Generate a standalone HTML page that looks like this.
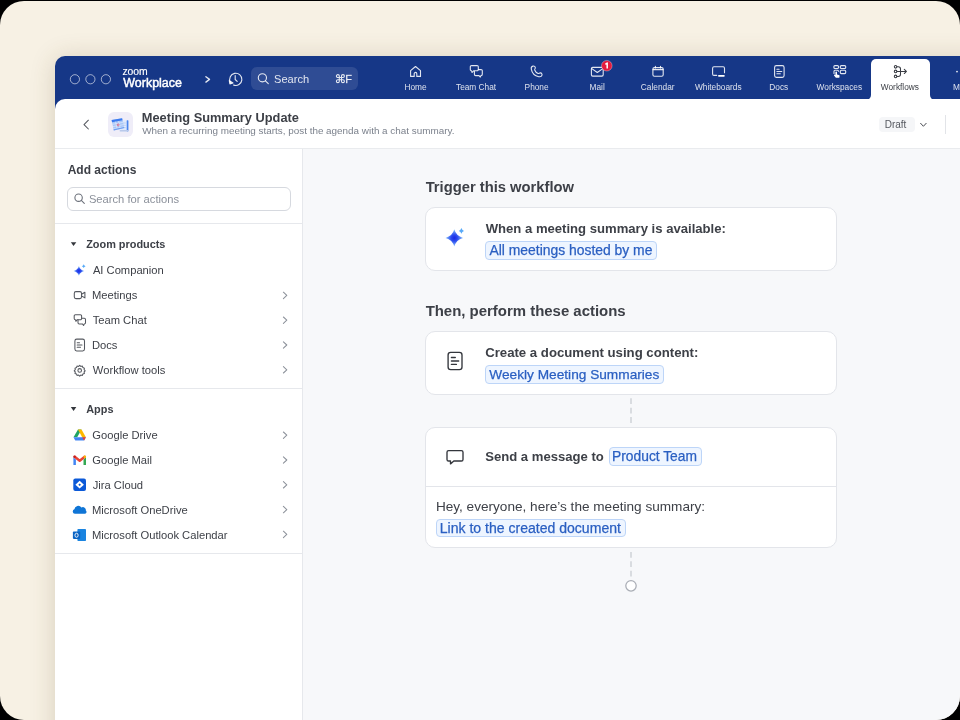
<!DOCTYPE html>
<html><head><meta charset="utf-8"><style>
html,body{margin:0;padding:0;width:960px;height:720px;overflow:hidden;background:#000;}
*{box-sizing:border-box;}
.frame{position:absolute;left:0;top:1px;width:960px;height:719px;border-radius:24px;background:#f7f1e4;overflow:hidden;}
.t{position:absolute;white-space:nowrap;font-family:"Liberation Sans",sans-serif;-webkit-font-smoothing:antialiased;}
.abs{position:absolute;}
.win{position:absolute;left:55px;top:56px;width:960px;height:720px;border-radius:10px 0 0 0;background:#163787;box-shadow:0 2px 26px rgba(90,70,30,0.20);}
.header{position:absolute;left:55px;top:99px;width:960px;height:50px;background:#fff;border-radius:10px 0 0 0;border-bottom:1px solid #e9ebee;}
.side{position:absolute;left:55px;top:149px;width:248px;height:600px;background:#fff;border-right:1px solid #e6e8ec;}
.canvas{position:absolute;left:303px;top:149px;width:700px;height:600px;background:#f7f8fa;}
.card{position:absolute;background:#fff;border:1px solid #e3e5ea;border-radius:10px;}
.chip{position:absolute;background:#eef5ff;border:1px solid #bdd5f8;border-radius:4px;}
</style></head><body>
<div class="frame"><div class="abs" style="left:0;top:-1px;width:960px;height:720px;will-change:transform">
<div class="win"></div>
<div class="abs" style="left:251px;top:67px;width:107px;height:23px;border-radius:6px;background:rgba(255,255,255,0.11)"></div>
<div class="abs" style="left:866px;top:94px;width:69px;height:10px;background:#fff"></div>
<div class="abs" style="left:856px;top:56px;width:15px;height:43.5px;background:#163787;border-radius:0 0 5px 0"></div>
<div class="abs" style="left:930px;top:56px;width:40px;height:43.5px;background:#163787;border-radius:0 0 0 5px"></div>
<div class="abs" style="left:871px;top:59px;width:59px;height:45px;background:#fff;border-radius:5px 5px 0 0"></div>
<div class="header"></div>
<div class="abs" style="left:107.5px;top:112px;width:25px;height:25px;border-radius:6px;background:#efedf8"></div>
<div class="abs" style="left:879px;top:116.7px;width:35.5px;height:15.5px;border-radius:4px;background:#f5f6f8"></div>
<div class="abs" style="left:945px;top:115px;width:1px;height:19px;background:#e2e4e8"></div>
<div class="side"></div>
<div class="abs" style="left:67.3px;top:186.7px;width:223.5px;height:24.8px;border:1px solid #d6d9df;border-radius:6px;background:#fff"></div>
<div class="abs" style="left:55px;top:223px;width:247.5px;height:1px;background:#e6e8ec"></div>
<div class="abs" style="left:55px;top:388px;width:247.5px;height:1px;background:#e6e8ec"></div>
<div class="abs" style="left:55px;top:553px;width:247.5px;height:1px;background:#e6e8ec"></div>
<div class="canvas"></div>
<div class="card" style="left:425.3px;top:206.7px;width:412px;height:64px"></div>
<div class="card" style="left:425.3px;top:330.9px;width:412px;height:64px"></div>
<div class="card" style="left:425.3px;top:426.7px;width:412px;height:121.8px"></div>
<div class="abs" style="left:426px;top:485.6px;width:410px;height:1px;background:#e3e5ea"></div>
<div class="chip" style="left:485.1px;top:241.1px;width:172.40px;height:18.5px"></div>
<div class="t" style="left:489.47px;top:244px;font-size:13.9px;line-height:13.9px;font-weight:400;color:#2a5fc2;-webkit-text-stroke:0.25px #2a5fc2">All meetings hosted by me</div>
<div class="chip" style="left:485.1px;top:365.1px;width:179.30px;height:18.5px"></div>
<div class="t" style="left:489.34px;top:368px;font-size:13.68px;line-height:13.68px;font-weight:400;color:#2a5fc2;-webkit-text-stroke:0.25px #2a5fc2">Weekly Meeting Summaries</div>
<div class="chip" style="left:608.6px;top:447.25px;width:93.40px;height:18.5px"></div>
<div class="t" style="left:612.07px;top:450px;font-size:13.8px;line-height:13.8px;font-weight:400;color:#2a5fc2;-webkit-text-stroke:0.25px #2a5fc2">Product Team</div>
<div class="chip" style="left:436.2px;top:518.75px;width:189.60px;height:18.5px"></div>
<div class="t" style="left:439.75px;top:521px;font-size:14.05px;line-height:14.05px;font-weight:400;color:#2a5fc2;-webkit-text-stroke:0.25px #2a5fc2">Link to the created document</div>

<div class="t" style="left:375.50px;width:80px;text-align:center;top:83px;font-size:8.3px;line-height:8.3px;font-weight:400;color:rgba(255,255,255,0.85);">Home</div>
<div class="t" style="left:436.05px;width:80px;text-align:center;top:83px;font-size:8.3px;line-height:8.3px;font-weight:400;color:rgba(255,255,255,0.85);">Team Chat</div>
<div class="t" style="left:496.60px;width:80px;text-align:center;top:83px;font-size:8.3px;line-height:8.3px;font-weight:400;color:rgba(255,255,255,0.85);">Phone</div>
<div class="t" style="left:557.15px;width:80px;text-align:center;top:83px;font-size:8.3px;line-height:8.3px;font-weight:400;color:rgba(255,255,255,0.85);">Mail</div>
<div class="t" style="left:617.70px;width:80px;text-align:center;top:83px;font-size:8.3px;line-height:8.3px;font-weight:400;color:rgba(255,255,255,0.85);">Calendar</div>
<div class="t" style="left:678.25px;width:80px;text-align:center;top:83px;font-size:8.3px;line-height:8.3px;font-weight:400;color:rgba(255,255,255,0.85);">Whiteboards</div>
<div class="t" style="left:738.80px;width:80px;text-align:center;top:83px;font-size:8.3px;line-height:8.3px;font-weight:400;color:rgba(255,255,255,0.85);">Docs</div>
<div class="t" style="left:799.35px;width:80px;text-align:center;top:83px;font-size:8.3px;line-height:8.3px;font-weight:400;color:rgba(255,255,255,0.85);">Workspaces</div>
<div class="t" style="left:859.90px;width:80px;text-align:center;top:83px;font-size:8.3px;line-height:8.3px;font-weight:400;color:#3a3d44;">Workflows</div>
<div class="t" style="left:922.45px;width:80px;text-align:center;top:83px;font-size:8.3px;line-height:8.3px;font-weight:400;color:rgba(255,255,255,0.85);">More</div>
<div class="t" style="left:122.58px;top:67px;font-size:10.4px;line-height:10.4px;font-weight:400;color:#fff;letter-spacing:-0.15px;-webkit-text-stroke:0.15px #fff">zoom</div>
<div class="t" style="left:123.35px;top:77px;font-size:12.45px;line-height:12.45px;font-weight:400;color:#fff;-webkit-text-stroke:0.45px #fff">Workplace</div>
<div class="t" style="left:274.00px;top:74px;font-size:11.1px;line-height:11.1px;font-weight:400;color:rgba(255,255,255,0.86);">Search</div>
<div class="t" style="left:345.20px;top:74px;font-size:11.0px;line-height:11.0px;font-weight:400;color:rgba(255,255,255,0.88);-webkit-text-stroke:0.3px rgba(255,255,255,0.6)">F</div>
<div class="t" style="left:141.74px;top:112px;font-size:12.8px;line-height:12.8px;font-weight:700;color:#3d4047;">Meeting Summary Update</div>
<div class="t" style="left:142.26px;top:126px;font-size:9.9px;line-height:9.9px;font-weight:400;color:#7b818c;">When a recurring meeting starts, post the agenda with a chat summary.</div>
<div class="t" style="left:884.68px;top:120px;font-size:10.0px;line-height:10.0px;font-weight:400;color:#55585f;">Draft</div>
<div class="t" style="left:67.70px;top:164px;font-size:12.0px;line-height:12.0px;font-weight:700;color:#3d4047;">Add actions</div>
<div class="t" style="left:88.89px;top:194px;font-size:11.2px;line-height:11.2px;font-weight:400;color:#8b909a;">Search for actions</div>
<div class="t" style="left:86.18px;top:239px;font-size:10.9px;line-height:10.9px;font-weight:700;color:#3d4047;">Zoom products</div>
<div class="t" style="left:86.23px;top:404px;font-size:10.9px;line-height:10.9px;font-weight:700;color:#3d4047;">Apps</div>
<div class="t" style="left:92.88px;top:265px;font-size:11.2px;line-height:11.2px;font-weight:400;color:#3e4148;">AI Companion</div>
<div class="t" style="left:91.98px;top:290px;font-size:11.2px;line-height:11.2px;font-weight:400;color:#3e4148;">Meetings</div>
<div class="t" style="left:92.65px;top:315px;font-size:11.2px;line-height:11.2px;font-weight:400;color:#3e4148;">Team Chat</div>
<div class="t" style="left:91.98px;top:340px;font-size:11.2px;line-height:11.2px;font-weight:400;color:#3e4148;">Docs</div>
<div class="t" style="left:92.85px;top:365px;font-size:11.2px;line-height:11.2px;font-weight:400;color:#3e4148;">Workflow tools</div>
<div class="t" style="left:92.34px;top:430px;font-size:11.2px;line-height:11.2px;font-weight:400;color:#3e4148;">Google Drive</div>
<div class="t" style="left:92.34px;top:455px;font-size:11.2px;line-height:11.2px;font-weight:400;color:#3e4148;">Google Mail</div>
<div class="t" style="left:92.73px;top:480px;font-size:11.2px;line-height:11.2px;font-weight:400;color:#3e4148;">Jira Cloud</div>
<div class="t" style="left:91.98px;top:505px;font-size:11.2px;line-height:11.2px;font-weight:400;color:#3e4148;">Microsoft OneDrive</div>
<div class="t" style="left:91.98px;top:530px;font-size:11.2px;line-height:11.2px;font-weight:400;color:#3e4148;">Microsoft Outlook Calendar</div>
<div class="t" style="left:425.63px;top:180px;font-size:14.75px;line-height:14.75px;font-weight:700;color:#3d4047;">Trigger this workflow</div>
<div class="t" style="left:485.69px;top:222px;font-size:13.1px;line-height:13.1px;font-weight:700;color:#3d4047;">When a meeting summary is available:</div>
<div class="t" style="left:425.63px;top:304px;font-size:14.95px;line-height:14.95px;font-weight:700;color:#3d4047;">Then, perform these actions</div>
<div class="t" style="left:485.16px;top:346px;font-size:13.2px;line-height:13.2px;font-weight:700;color:#3d4047;">Create a document using content:</div>
<div class="t" style="left:485.22px;top:450px;font-size:13.1px;line-height:13.1px;font-weight:700;color:#3d4047;">Send a message to</div>
<div class="t" style="left:435.88px;top:500px;font-size:13.6px;line-height:13.6px;font-weight:400;color:#3e4148;">Hey, everyone, here’s the meeting summary:</div>

<svg class="abs" style="left:0;top:0" width="960" height="720" viewBox="0 0 960 720">
<!-- traffic lights -->
<g fill="none" stroke="rgba(255,255,255,0.62)" stroke-width="0.95">
<circle cx="74.9" cy="79.25" r="4.6"/><circle cx="90.4" cy="79.25" r="4.6"/><circle cx="105.9" cy="79.25" r="4.6"/>
</g>
<g fill="none" stroke="rgba(255,255,255,0.88)" stroke-width="1.1" stroke-linecap="round" stroke-linejoin="round">
<!-- chevron right -->
<path d="M205.9,76.7 L209.5,79.4 L205.9,82.1" stroke-width="1.35"/>
<!-- history -->
<path d="M230.4,82.2 A6.1,6.1 0 1 1 233.5,85"/>
<path d="M229.3,80.6 L229.9,83.9 L233,82.9 Z" fill="rgba(255,255,255,0.88)"/>
<path d="M235.2,75.5 V79.5 L237.2,81.3"/>
<!-- search magnifier -->
<circle cx="262.4" cy="77.8" r="4.1"/>
<path d="M265.4,80.8 L268.3,83.7"/>
<!-- cmd symbol -->
<path d="M339.3,76.05 A1.45,1.45 0 1 0 337.85,77.5 H342.95 A1.45,1.45 0 1 0 341.5,76.05 V81.15 A1.45,1.45 0 1 0 342.95,79.7 H337.85 A1.45,1.45 0 1 0 339.3,81.15 Z" stroke-width="1.1"/>
<!-- home -->
<path d="M410.6,76.4 V70.7 L415.5,66.5 L420.5,70.7 V76.4 H416.8 V73.7 A1.3,1.3 0 0 0 414.2,73.7 V76.4 Z"/>
<!-- team chat -->
<path d="M471.6,65.6 H477 A1.3,1.3 0 0 1 478.3,66.9 V69.5 A1.3,1.3 0 0 1 477,70.8 H473.6 L472.1,72.5 L471.6,70.8 A1.3,1.3 0 0 1 470.3,69.5 V66.9 A1.3,1.3 0 0 1 471.6,65.6 Z"/>
<path d="M478.4,69.6 H481 A1.3,1.3 0 0 1 482.3,70.9 V74.3 A1.3,1.3 0 0 1 481,75.6 L480.3,77.1 L479,75.6 H475.7 A1.3,1.3 0 0 1 474.4,74.3 V71.2"/>
<!-- phone -->
<path d="M533,66.1 C534.3,65.8 535.2,66.6 535.3,67.6 C535.4,68.6 534.5,69.2 534.7,70 C535.3,71.6 536.6,72.9 538.1,73.5 C538.9,73.8 539.5,72.7 540.5,72.9 C541.6,73.1 542.3,74.1 542,75.1 C541.6,76.5 540.2,77 538.8,76.7 C534.9,75.9 532,73 531.3,69.1 C531,67.6 531.7,66.4 533,66.1 Z"/>
<!-- mail -->
<rect x="591.4" y="67.4" width="11.8" height="8.7" rx="1.3"/>
<path d="M591.8,68.6 L597.3,72.5 L602.8,68.6"/>
<!-- calendar -->
<rect x="652.9" y="67.6" width="10.3" height="8.7" rx="1.5"/>
<path d="M653,69.6 H663.1 M655.4,66.2 V68 M660.5,66.2 V68"/>
<!-- whiteboard -->
<path d="M716.7,75.4 H714 A1.4,1.4 0 0 1 712.6,74 V68.2 A1.4,1.4 0 0 1 714,66.8 H723.1 A1.4,1.4 0 0 1 724.5,68.2 V72.8"/>
<!-- docs -->
<rect x="774.6" y="65.6" width="9.5" height="11.8" rx="1.8"/>
<path d="M776.9,69.3 H779.1 M776.9,71.5 H781.8 M776.9,73.7 H780.3"/>
<!-- workspaces -->
<rect x="833.9" y="65.6" width="4.6" height="2.9" rx="1"/><rect x="840.3" y="65.6" width="5.4" height="2.9" rx="1"/>
<rect x="840.3" y="70.3" width="5.4" height="3.3" rx="1"/>
<path d="M834,73.5 V71.3 A1,1 0 0 1 835,70.3 H837.5 A1,1 0 0 1 838.5,71.3"/>
</g>
<!-- whiteboard pen -->
<rect x="718" y="74.9" width="6.8" height="1.9" rx="0.95" fill="#fff"/>
<!-- workspace cursor hand -->
<path d="M835.4,72.3 a0.8,0.8 0 0 1 1.6,0 V74.5 L838.8,75 A1,1 0 0 1 839.6,76 L839.3,77.8 H835.9 L834,75.6 a0.7,0.7 0 0 1 1.1,-0.8 L835.4,75.2 Z" fill="#fff"/>
<!-- mail badge -->
<circle cx="606.8" cy="65.7" r="5.3" fill="#e31b3f" stroke="rgba(255,255,255,0.55)" stroke-width="0.6"/>
<path d="M605.4,64.3 L607.2,63 V68.6" fill="none" stroke="#fff" stroke-width="1.5" stroke-linejoin="round"/>
<!-- more dots -->
<g fill="rgba(255,255,255,0.9)"><circle cx="957" cy="71.6" r="0.9"/><circle cx="962.5" cy="71.6" r="0.9"/></g>
<!-- workflows icon -->
<g fill="none" stroke="#3a3d44" stroke-width="1.05" stroke-linecap="round" stroke-linejoin="round">
<circle cx="895.6" cy="66.8" r="1.3"/><circle cx="895.6" cy="71.45" r="1.3"/><circle cx="895.6" cy="76.4" r="1.3"/>
<path d="M896.9,66.8 H898.3 A2.2,2.2 0 0 1 900.5,69 V74.2 A2.2,2.2 0 0 1 898.3,76.4 H896.9"/>
<path d="M896.9,71.45 H906.4 M904.3,69.35 L906.4,71.45 L904.3,73.55"/>
</g>
<!-- header back chevron -->
<path d="M88.4,120.2 L84,124.6 L88.4,129" fill="none" stroke="#55585f" stroke-width="1.05" stroke-linecap="round" stroke-linejoin="round"/>
<!-- header app icon (calendar illustration) -->
<g>
<rect x="119.7" y="120.2" width="8.6" height="11.2" rx="1" fill="#dfe9fc"/>
<rect x="126.7" y="120.2" width="1.7" height="11.2" rx="0.6" fill="#4a86ee"/>
<rect x="119.7" y="129.9" width="8.7" height="1.6" rx="0.6" fill="#b9c9ea"/>
<path d="M121.5,123 H125.8 M121.5,125.3 H125.8 M121.5,127.6 H125.8" stroke="#a9c4f2" stroke-width="0.6"/>
<path d="M111.6,120.1 L122.1,118.2 L124.3,128.1 L113.8,130.6 Z" fill="#a9c7f7"/>
<path d="M111.6,120.1 L122.1,118.2 L122.55,120.3 L112.05,122.2 Z" fill="#3b7bf0"/>
<path d="M112.6,124.3 L123,122.3 M113.1,126.6 L123.5,124.6 M113.6,128.9 L123.9,126.9 M115.5,121.7 L117.4,130 M118.6,121.1 L120.5,129.3" stroke="#e6effd" stroke-width="0.6"/>
<path d="M113.8,130.6 L124.3,128.1 L124,126.9 L113.5,129.3 Z" fill="#6f9ff2"/>
<circle cx="118.2" cy="124.9" r="1" fill="none" stroke="#e2506a" stroke-width="0.7"/>
</g>
<!-- draft chevron -->
<path d="M920.6,123.3 L923.4,126.3 L926.2,123.3" fill="none" stroke="#4a4d54" stroke-width="1" stroke-linecap="round" stroke-linejoin="round"/>
<!-- sidebar search icon -->
<g fill="none" stroke="#6b707a" stroke-width="1.1" stroke-linecap="round">
<circle cx="78.6" cy="197.7" r="3.7"/><path d="M81.3,200.4 L84.3,203.4"/>
</g>
<!-- triangles -->
<path d="M70.8,242.3 H76.3 L73.55,246 Z" fill="#33363c"/>
<path d="M70.8,407 H76.3 L73.55,410.9 Z" fill="#33363c"/>
<!-- sidebar chevrons -->
<g fill="none" stroke="#8d929b" stroke-width="1.05" stroke-linecap="round" stroke-linejoin="round">
<path d="M283.4,292.2 L286.8,295.4 L283.4,298.6"/>
<path d="M283.4,317 L286.8,320.2 L283.4,323.4"/>
<path d="M283.4,341.8 L286.8,345 L283.4,348.2"/>
<path d="M283.4,366.6 L286.8,369.8 L283.4,373"/>
<path d="M283.4,432 L286.8,435.2 L283.4,438.4"/>
<path d="M283.4,456.8 L286.8,460 L283.4,463.2"/>
<path d="M283.4,481.6 L286.8,484.8 L283.4,488"/>
<path d="M283.4,506.4 L286.8,509.6 L283.4,512.8"/>
<path d="M283.4,531.2 L286.8,534.4 L283.4,537.6"/>
</g>
<defs>
<radialGradient id="spark" cx="0.5" cy="0.5" r="0.5">
<stop offset="0" stop-color="#1828e4"/><stop offset="0.35" stop-color="#2a48ee"/><stop offset="1" stop-color="#8cc8ff"/>
</radialGradient>
</defs>
<!-- sidebar AI sparkle -->
<path d="M78.9,266 Q80,270 84.2,270.9 Q80,271.8 78.9,275.8 Q77.8,271.8 73.6,270.9 Q77.8,270 78.9,266 Z" fill="url(#spark)"/>
<path d="M83.7,264.3 Q84.1,265.8 85.6,266.2 Q84.1,266.6 83.7,268.1 Q83.3,266.6 81.8,266.2 Q83.3,265.8 83.7,264.3 Z" fill="#58aaf8"/>
<!-- sidebar product icons -->
<g fill="none" stroke="#55585f" stroke-width="1.05" stroke-linecap="round" stroke-linejoin="round">
<rect x="74.3" y="291.6" width="7.2" height="7" rx="1.6"/>
<path d="M81.6,294.2 L84.9,292.3 V297.9 L81.6,296"/>
<path d="M75.4,314.7 H80.4 A1.2,1.2 0 0 1 81.6,315.9 V318.5 A1.2,1.2 0 0 1 80.4,319.7 H77.2 L75.9,321.3 L75.4,319.7 A1.2,1.2 0 0 1 74.2,318.5 V315.9 A1.2,1.2 0 0 1 75.4,314.7 Z"/>
<path d="M81.7,318.3 H84.3 A1.2,1.2 0 0 1 85.5,319.5 V322.7 A1.2,1.2 0 0 1 84.3,323.9 L83.6,325.5 L82.4,323.9 H79.2 A1.2,1.2 0 0 1 78,322.7 V319.8"/>
<rect x="74.9" y="339.1" width="9.6" height="11.8" rx="1.8"/>
<path d="M77.2,342.7 H79.5 M77.2,345 H82 M77.2,347.3 H80.5"/>
<circle cx="79.7" cy="370.4" r="1.8"/>
<path d="M79.7,365.3 l1.1,1.1 l1.6,-0.3 l0.5,1.5 l1.5,0.6 l-0.3,1.5 l1.1,1.1 l-1.1,1.1 l0.3,1.5 l-1.5,0.5 l-0.5,1.5 l-1.6,-0.3 l-1.1,1.1 l-1.1,-1.1 l-1.6,0.3 l-0.5,-1.5 l-1.5,-0.5 l0.3,-1.5 l-1.1,-1.1 l1.1,-1.1 l-0.3,-1.5 l1.5,-0.6 l0.5,-1.5 l1.6,0.3 Z"/>
</g>
<!-- google drive -->
<path d="M78,429.6 H81.5 L77.2,437.2 H73.5 Z" fill="#1fa463"/>
<path d="M81.5,429.6 L85.9,437.2 H82.2 L78,429.6 Z" fill="#ffba00"/>
<path d="M73.5,437.3 H85.9 L84.1,440.4 H75.3 Z" fill="#4285f4"/>
<path d="M82.2,437.3 H85.9 L84.1,440.4 Z" fill="#ea4335"/>
<!-- gmail -->
<path d="M73.4,457.2 V465 H75.9 V459.4 Z" fill="#4285f4"/>
<path d="M83.5,459.4 V465 H86 V457.2 Z" fill="#34a853"/>
<path d="M74.7,456.8 L79.7,460.7 L84.7,456.8" fill="none" stroke="#ea4335" stroke-width="2.5" stroke-linejoin="round" stroke-linecap="round"/>
<circle cx="84.8" cy="456.7" r="1.25" fill="#fbbc04"/>
<circle cx="74.6" cy="456.7" r="1.25" fill="#c5221f"/>
<!-- jira -->
<rect x="73.3" y="478.4" width="12.7" height="12.6" rx="2" fill="#0b59d8"/>
<path d="M79.65,480.8 L83.9,484.7 L79.65,488.6 L75.4,484.7 Z" fill="#fff"/>
<path d="M79.65,483.4 L81,484.7 L79.65,486 L78.3,484.7 Z" fill="#0b59d8"/>
<!-- onedrive -->
<path d="M74.9,513.8 A2.3,2.3 0 0 1 74.4,509.3 A3.8,3.8 0 0 1 81.4,507.6 A2.9,2.9 0 0 1 85.8,510.6 A1.8,1.8 0 0 1 84.5,513.8 Z" fill="#0f75d6"/>
<!-- outlook -->
<rect x="77.4" y="529" width="8.6" height="12" rx="0.8" fill="#1a84e0"/>
<rect x="72.9" y="531.6" width="7.3" height="7.3" rx="0.8" fill="#0a64c4"/>
<ellipse cx="76.55" cy="535.25" rx="1.6" ry="2" fill="none" stroke="#fff" stroke-width="0.9"/>
<!-- canvas big sparkle -->
<path d="M454.3,229.3 Q456.1,236 463.1,237.9 Q456.1,239.8 454.3,246.6 Q452.5,239.8 445.5,237.9 Q452.5,236 454.3,229.3 Z" fill="url(#spark)"/>
<path d="M461.4,228.1 Q462,230.3 464,230.9 Q462,231.5 461.4,233.7 Q460.8,231.5 458.8,230.9 Q460.8,230.3 461.4,228.1 Z" fill="#58aaf8"/>
<!-- canvas doc icon -->
<g fill="none" stroke="#33363c" stroke-width="1.35" stroke-linecap="round" stroke-linejoin="round">
<rect x="448.1" y="352.4" width="13.9" height="17.3" rx="2.6"/>
<path d="M451.4,357.5 H455.3 M451.4,361 H458.7 M451.4,364.4 H456.4"/>
<!-- message icon -->
<path d="M448.6,450.6 H461.4 A1.6,1.6 0 0 1 463,452.2 V459.4 A1.6,1.6 0 0 1 461.4,461 H453.8 L450.5,463.9 V461 H448.6 A1.6,1.6 0 0 1 447,459.4 V452.2 A1.6,1.6 0 0 1 448.6,450.6 Z"/>
</g>
<!-- dashed connectors -->
<g stroke="#c2c5cb" stroke-width="1.1" stroke-dasharray="5.8 3.6">
<path d="M631,398.3 V424"/>
<path d="M631,551.9 V578"/>
</g>
<circle cx="631" cy="585.8" r="5.2" fill="#fff" stroke="#a9adb5" stroke-width="1.25"/>
</svg>

</div></div>
</body></html>
